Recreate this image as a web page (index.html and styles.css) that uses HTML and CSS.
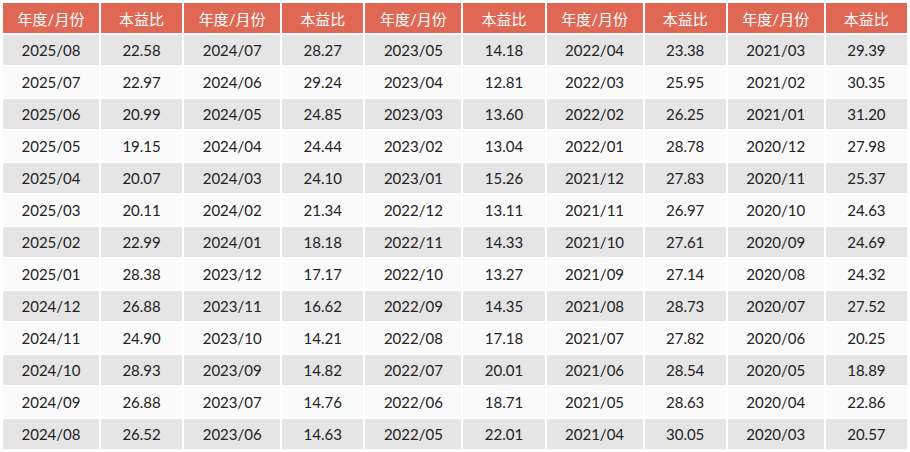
FILE: index.html
```html
<!DOCTYPE html>
<html lang="zh">
<head>
<meta charset="utf-8">
<link rel="stylesheet" href="styles.css">
</head>
<body>
<table class="pe-table">
<colgroup>
<col class="c-date"><col class="c-val"><col class="c-date"><col class="c-val"><col class="c-date"><col class="c-val"><col class="c-date"><col class="c-val"><col class="c-date"><col class="c-val">
</colgroup>
<thead>
<tr><th>年度/月份</th><th>本益比</th><th>年度/月份</th><th>本益比</th><th>年度/月份</th><th>本益比</th><th>年度/月份</th><th>本益比</th><th>年度/月份</th><th>本益比</th></tr>
</thead>
<tbody>
<tr><td>2025/08</td><td>22.58</td><td>2024/07</td><td>28.27</td><td>2023/05</td><td>14.18</td><td>2022/04</td><td>23.38</td><td>2021/03</td><td>29.39</td></tr>
<tr><td>2025/07</td><td>22.97</td><td>2024/06</td><td>29.24</td><td>2023/04</td><td>12.81</td><td>2022/03</td><td>25.95</td><td>2021/02</td><td>30.35</td></tr>
<tr><td>2025/06</td><td>20.99</td><td>2024/05</td><td>24.85</td><td>2023/03</td><td>13.60</td><td>2022/02</td><td>26.25</td><td>2021/01</td><td>31.20</td></tr>
<tr><td>2025/05</td><td>19.15</td><td>2024/04</td><td>24.44</td><td>2023/02</td><td>13.04</td><td>2022/01</td><td>28.78</td><td>2020/12</td><td>27.98</td></tr>
<tr><td>2025/04</td><td>20.07</td><td>2024/03</td><td>24.10</td><td>2023/01</td><td>15.26</td><td>2021/12</td><td>27.83</td><td>2020/11</td><td>25.37</td></tr>
<tr><td>2025/03</td><td>20.11</td><td>2024/02</td><td>21.34</td><td>2022/12</td><td>13.11</td><td>2021/11</td><td>26.97</td><td>2020/10</td><td>24.63</td></tr>
<tr><td>2025/02</td><td>22.99</td><td>2024/01</td><td>18.18</td><td>2022/11</td><td>14.33</td><td>2021/10</td><td>27.61</td><td>2020/09</td><td>24.69</td></tr>
<tr><td>2025/01</td><td>28.38</td><td>2023/12</td><td>17.17</td><td>2022/10</td><td>13.27</td><td>2021/09</td><td>27.14</td><td>2020/08</td><td>24.32</td></tr>
<tr><td>2024/12</td><td>26.88</td><td>2023/11</td><td>16.62</td><td>2022/09</td><td>14.35</td><td>2021/08</td><td>28.73</td><td>2020/07</td><td>27.52</td></tr>
<tr><td>2024/11</td><td>24.90</td><td>2023/10</td><td>14.21</td><td>2022/08</td><td>17.18</td><td>2021/07</td><td>27.82</td><td>2020/06</td><td>20.25</td></tr>
<tr><td>2024/10</td><td>28.93</td><td>2023/09</td><td>14.82</td><td>2022/07</td><td>20.01</td><td>2021/06</td><td>28.54</td><td>2020/05</td><td>18.89</td></tr>
<tr><td>2024/09</td><td>26.88</td><td>2023/07</td><td>14.76</td><td>2022/06</td><td>18.71</td><td>2021/05</td><td>28.63</td><td>2020/04</td><td>22.86</td></tr>
<tr><td>2024/08</td><td>26.52</td><td>2023/06</td><td>14.63</td><td>2022/05</td><td>22.01</td><td>2021/04</td><td>30.05</td><td>2020/03</td><td>20.57</td></tr>
</tbody>
</table>
</body>
</html>
```
FILE: styles.css
```css
html, body {
  margin: 0;
  padding: 0;
  background: #ffffff;
}
body {
  padding: 1px;
}
.pe-table {
  width: 908px;
  table-layout: fixed;
  border-collapse: separate;
  border-spacing: 2px;
  font-family: Lato, "Noto Sans CJK SC", sans-serif;
  font-size: 15px;
  color: #222222;
}
.c-date { width: 96px; }
.c-val { width: 81.2px; }
.pe-table th,
.pe-table td {
  height: 30px;
  padding: 0;
  text-align: center;
  vertical-align: middle;
}
.pe-table th {
  background: #e06753;
  color: #ffffff;
  font-weight: normal;
  font-family: Lato, "Noto Sans CJK SC", sans-serif;
}
.pe-table tbody tr:nth-child(odd) td {
  background: #e5e5e5;
}
.pe-table tbody tr:nth-child(even) td {
  background: #fafafa;
}
```
